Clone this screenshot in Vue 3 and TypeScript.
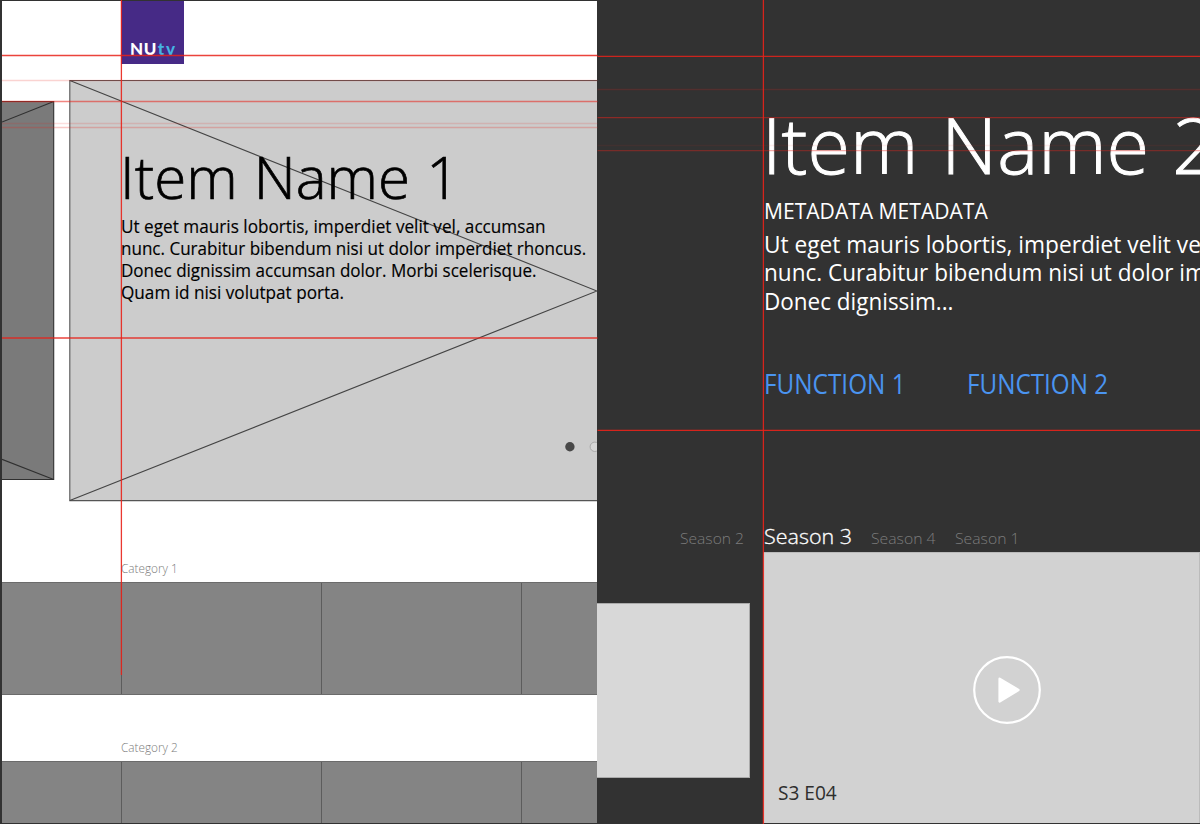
<script setup lang="ts">
import type { Directive } from 'vue'

interface Line { text: string; width: number }
interface Guide { y: number; opacity: number }

// Condenses or widens a line of text so that it sets to the given measure.
const vFit: Directive<HTMLElement, number> = {
  mounted(el, { value }) {
    el.style.transform = `scaleX(${value / el.offsetWidth})`
  },
}

const homeCopy: Line[] = [
  { text: 'Ut eget mauris lobortis, imperdiet velit vel, accumsan', width: 425 },
  { text: 'nunc. Curabitur bibendum nisi ut dolor imperdiet rhoncus.', width: 465 },
  { text: 'Donec dignissim accumsan dolor. Morbi scelerisque.', width: 415.5 },
  { text: 'Quam id nisi volutpat porta.', width: 222.8 },
]
const detailCopy: Line[] = [
  { text: 'Ut eget mauris lobortis, imperdiet velit vel, accumsan', width: 561 },
  { text: 'nunc. Curabitur bibendum nisi ut dolor imperdiet rhoncus.', width: 615 },
  { text: 'Donec dignissim...', width: 189.5 },
]
const functions: Line[] = [
  { text: 'FUNCTION 1', width: 142 },
  { text: 'FUNCTION 2', width: 141.5 },
]
const seasons = [
  { text: 'Season 2', width: 63.5, active: false },
  { text: 'Season 3', width: 87.5, active: true },
  { text: 'Season 4', width: 64, active: false },
  { text: 'Season 1', width: 64, active: false },
]
const categories = ['Category 1', 'Category 2']

const homeGuides: Guide[] = [
  { y: 55.5, opacity: 0.85 },
  { y: 80.5, opacity: 0.2 },
  { y: 101.5, opacity: 0.55 },
  { y: 123.5, opacity: 0.15 },
  { y: 127.5, opacity: 0.25 },
  { y: 338, opacity: 0.85 },
]
const detailGuides: Guide[] = [
  { y: 56.3, opacity: 0.85 },
  { y: 89.5, opacity: 0.18 },
  { y: 117.7, opacity: 0.5 },
  { y: 145.5, opacity: 0.08 },
  { y: 150.7, opacity: 0.38 },
  { y: 430.3, opacity: 0.9 },
]
</script>

<template>
  <main class="board">
    <section class="home">
      <div class="hero-zone">
        <svg class="wire" width="596" height="520" viewBox="2 0 596 520">
          <g stroke="#303030" stroke-width="1.1">
            <path d="M-20 101.5H53.7V479.5H-20z" fill="#7a7a7a" />
            <path d="M2 122L53.7 101.5M2 459.3L53.7 479.5" fill="none" />
            <path d="M69.8 80.5H640V500.6H69.8z" fill="#ccc" stroke="#555" />
            <path d="M69.8 80.5L597 291L69.8 500.6" fill="none" stroke="#444" />
          </g>
        </svg>
        <div class="logo"><span class="nu">NU</span><span class="tv">tv</span></div>
        <div class="home-text">
          <h1 class="title"><span v-fit="339.5" class="fit">Item Name 1</span></h1>
          <p v-for="line in homeCopy" :key="line.text" class="copy">
            <span v-fit="line.width" class="fit">{{ line.text }}</span>
          </p>
        </div>
        <svg class="pager" width="40" height="14" viewBox="560 440 40 14">
          <circle cx="569.9" cy="446.8" r="4.7" fill="#484848" />
          <circle cx="594.8" cy="446.8" r="4.7" fill="#d6d6d6" stroke="#aaa" />
        </svg>
      </div>

      <div v-for="name in categories" :key="name" class="category">
        <h2 class="category-name"><span v-fit="56.5" class="fit">{{ name }}</span></h2>
        <div class="strip">
          <div v-for="n in 4" :key="n" class="tile"></div>
        </div>
      </div>
    </section>

    <section class="detail">
      <div class="summary">
        <h1 class="title"><span v-fit="454.5" class="fit">Item Name 2</span></h1>
        <p class="metadata"><span v-fit="224" class="fit">METADATA METADATA</span></p>
        <p v-for="line in detailCopy" :key="line.text" class="copy">
          <span v-fit="line.width" class="fit">{{ line.text }}</span>
        </p>
        <nav class="functions">
          <a v-for="fn in functions" :key="fn.text" class="function">
            <span v-fit="fn.width" class="fit">{{ fn.text }}</span>
          </a>
        </nav>
      </div>

      <nav class="seasons">
        <a v-for="s in seasons" :key="s.text" class="season" :class="{ active: s.active }">
          <span v-fit="s.width" class="fit">{{ s.text }}</span>
        </a>
      </nav>

      <div class="episodes">
        <div class="previous"></div>
        <div class="current">
          <svg class="play" width="70" height="70" viewBox="0 0 70 70">
            <circle cx="35" cy="35" r="32.8" fill="none" stroke="#fff" stroke-width="2.2" />
            <path d="M27.6 23.8L46.5 35L27.6 46.4z" fill="#fff" stroke="#fff" stroke-width="2.4" stroke-linejoin="round" />
          </svg>
          <span class="episode"><span v-fit="59" class="fit">S3 E04</span></span>
        </div>
      </div>
    </section>

    <svg class="guides" width="1200" height="824" viewBox="0 0 1200 824" fill="none" stroke="#e8221a" stroke-width="1.3">
      <line v-for="g in homeGuides" :key="g.y" x1="2" x2="597.5" :y1="g.y" :y2="g.y" :stroke-opacity="g.opacity" />
      <line v-for="g in detailGuides" :key="g.y" x1="597.5" x2="1200" :y1="g.y" :y2="g.y" :stroke-opacity="g.opacity" />
      <path d="M121.4 0V675" stroke-opacity=".9" />
      <path d="M763.4 0V824" stroke-opacity=".9" />
    </svg>
  </main>
</template>

<style>
body {
  margin: 0;
  overflow: hidden;
}
</style>

<style scoped>
.board {
  position: relative;
  display: flex;
  width: 1200px;
  height: 824px;
  box-sizing: border-box;
  padding: 1px 0 1px 2px;
  overflow: hidden;
  background: #323232;
  font-family: "Open Sans", "Noto Sans", sans-serif;
}
h1, h2, p {
  margin: 0;
  font-weight: 400;
}
.fit {
  display: inline-block;
  white-space: nowrap;
  transform-origin: 0 50%;
}
.home {
  flex: 0 0 595.3px;
  height: 822px;
  overflow: hidden;
  background: #fff;
}
.hero-zone {
  position: relative;
  height: 558px;
  padding-left: 119px;
}
.wire {
  position: absolute;
  left: 0;
  top: -1px;
}
.logo {
  position: relative;
  box-sizing: border-box;
  width: 63px;
  height: 63px;
  padding: 38px 0 0 9px;
  background: #462a86;
  font: 900 17px/20px Lato, sans-serif;
  white-space: nowrap;
}
.nu {
  color: #fff;
  letter-spacing: 0.5px;
}
.tv {
  margin-left: 1px;
  color: #45b4e2;
  letter-spacing: 1.8px;
}
.home-text {
  position: relative;
  padding-top: 82px;
  color: #000;
}
.home-text .title {
  height: 60px;
  margin-bottom: 8.9px;
  font-size: 58.5px;
  font-weight: 300;
  line-height: 60px;
  word-spacing: 1px;
  -webkit-text-stroke: 0.7px currentColor;
}
.home-text .title .fit {
  margin-left: -1.5px;
}
.home-text .copy {
  height: 21.9px;
  font-size: 18.4px;
  line-height: 21.9px;
  -webkit-text-stroke: 0.15px currentColor;
}
.pager {
  position: absolute;
  left: 558px;
  top: 439px;
}
.category {
  height: 179px;
}
.category-name {
  height: 23px;
  padding-left: 119px;
  color: #7c7c7c;
  font-size: 12.3px;
  font-weight: 300;
  line-height: 20px;
}
.strip {
  display: flex;
  box-sizing: border-box;
  height: 113px;
  border: solid #6b6b6b;
  border-width: 1px 0;
  background: #848484;
}
.tile {
  flex: 0 0 200px;
  box-sizing: border-box;
  border-right: 1px solid #5c5c5c;
}
.tile:first-child {
  flex-basis: 120px;
}
.detail {
  flex: 1;
  min-width: 0;
  overflow: hidden;
  color: #fff;
}
.summary {
  box-sizing: border-box;
  height: 522px;
  padding: 102.7px 0 0 166.5px;
}
.summary .title {
  height: 80px;
  margin-bottom: 12.9px;
  font-size: 78px;
  font-weight: 300;
  line-height: 80px;
  word-spacing: 3px;
  -webkit-text-stroke: 1px currentColor;
}
.summary .title .fit {
  margin-left: -2px;
}
.metadata {
  height: 28px;
  margin-bottom: 5px;
  font-size: 22.3px;
  line-height: 28px;
}
.summary .copy {
  height: 28.5px;
  font-size: 23.6px;
  line-height: 28.5px;
}
.functions {
  display: flex;
  gap: 59px;
  margin-top: 53.3px;
}
.function {
  width: 144px;
  color: #4a94f0;
  font-size: 26.4px;
  line-height: 32px;
}
.seasons {
  display: flex;
  align-items: baseline;
  height: 29px;
  padding-left: 83px;
}
.season {
  width: 64px;
  margin-right: 20px;
  color: #7c7c7c;
  font-size: 15px;
  font-weight: 300;
  line-height: 28px;
}
.season.active {
  width: 87px;
  color: #fff;
  font-size: 19.4px;
  -webkit-text-stroke: 0.3px currentColor;
}
.episodes {
  display: grid;
  grid-template-columns: 152.5px 1fr;
  column-gap: 13.5px;
  height: 272px;
}
.previous {
  box-sizing: border-box;
  height: 175px;
  margin-top: 51px;
  border: 1px solid #aaa;
  border-left: 0;
  background: #d8d8d8;
}
.current {
  display: flex;
  flex-direction: column;
  box-sizing: border-box;
  height: 272px;
  border: solid #bbb;
  border-width: 1px 1px 1px 0;
  background: #d2d2d2;
}
.play {
  margin: 102px 0 0 208.5px;
}
.episode {
  margin: 55px 0 0 15px;
  color: #2e2e2e;
  font-size: 19.4px;
  line-height: 26px;
}
.guides {
  position: absolute;
  left: 0;
  top: 0;
  pointer-events: none;
}
</style>
